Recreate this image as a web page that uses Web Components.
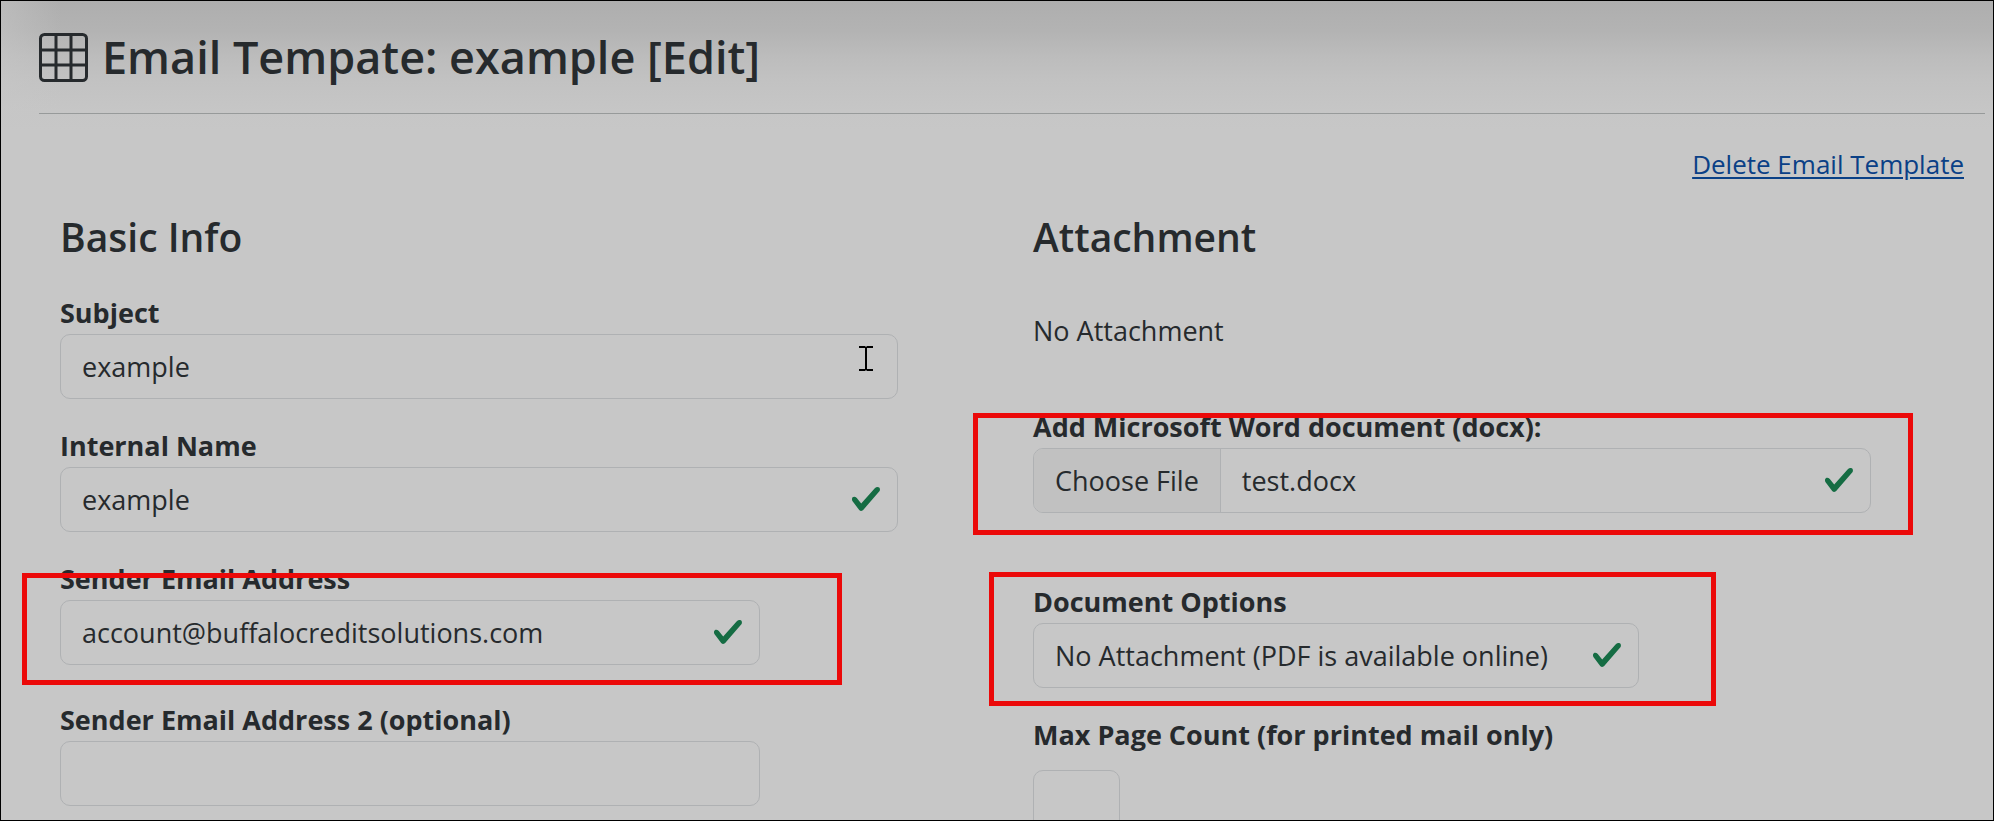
<!DOCTYPE html>
<html lang="en">
<head>
<meta charset="utf-8">
<title>Email Template</title>
<style>
body {
  margin: 0;
  --ink: #262a2d;
  --page: #c7c7c7;
  --line: #afb1b3;
  --link: #0a4086;
  --valid: #156c43;
  --mark: #eb0909;
  color: var(--ink);
  font-family: "Segoe UI", "Open Sans", sans-serif;
  font-size: 27px;
  line-height: 42px;
}
</style>
</head>
<body>
<email-template-page></email-template-page>

<template id="page-title">
<style>
:host {
  display: block;
}
header {
  display: flex;
  align-items: center;
  gap: 14px;
  height: 113px;
  box-sizing: border-box;
  border-bottom: 1px solid #979a9a;
}
svg {
  width: 49px;
  height: 49px;
  fill: none;
  stroke: currentColor;
  stroke-width: 3;
}
h1 {
  margin: 0;
  font-size: 45px;
  line-height: 60px;
  font-weight: 600;
}
</style>
<header>
  <svg viewBox="0 0 49 49" aria-hidden="true"><rect x="1.5" y="1.5" width="46" height="46" rx="4"/><path d="M17 2v45M32 2v45M2 17h45M2 32h45"/></svg>
  <h1><slot></slot></h1>
</header>
</template>

<template id="form-section">
<style>
:host {
  display: block;
  flex: 1 1 0;
  min-width: 0;
  padding: 0 21px;
}
h2 {
  margin: 0;
  font-size: 39px;
  line-height: 50px;
  font-weight: 600;
}
</style>
<h2></h2>
<slot></slot>
</template>

<template id="form-field">
<style>
:host {
  display: block;
}
label {
  display: block;
  height: 42px;
  font-weight: 700;
}
:host([loose]) label {
  margin-bottom: 14px;
}
.control {
  position: relative;
  display: flex;
  width: var(--field-width, 90%);
  height: 65px;
  box-sizing: border-box;
  border: 1px solid var(--line);
  border-radius: 10px;
  overflow: hidden;
}
.control:focus-within {
  border-color: var(--link);
}
input, select, button {
  margin: 0;
  border: 0;
  padding: 0 21px;
  background: none;
  color: inherit;
  font: inherit;
  outline: 0;
  appearance: none;
}
.text, select {
  flex: 1;
  width: 100%;
  min-width: 0;
  box-sizing: border-box;
}
button {
  background: #c1c1c1;
  border-right: 1px solid var(--line);
  cursor: pointer;
}
output {
  flex: 1;
  padding: 0 21px;
  line-height: 63px;
}
svg {
  display: none;
  position: absolute;
  right: 15px;
  top: 15px;
  width: 32px;
  height: 32px;
  fill: var(--valid);
  pointer-events: none;
}
:host([valid]) svg {
  display: block;
}
</style>
<label for="control"></label>
<div class="control">
  <svg viewBox="0 0 8 8" aria-hidden="true"><path d="M2.3 6.73.6 4.53c-.4-1.04.46-1.4 1.1-.8l1.1 1.4 3.4-3.8c.6-.63 1.6-.27 1.2.7l-4 4.6c-.43.5-.8.4-1.1.1z"/></svg>
</div>
</template>

<template id="mark-box">
<style>
:host {
  display: block;
  position: absolute;
  box-sizing: border-box;
  border: 5px solid var(--mark);
  pointer-events: none;
}
</style>
</template>

<template id="email-template-page">
<style>
:host {
  display: block;
  position: relative;
  height: 100vh;
  box-sizing: border-box;
  border: 1px solid #000;
  padding: 0 8px 0 38px;
  overflow: hidden;
  background:
    linear-gradient(to right, #c7c7c780, #c7c7c700 60px),
    linear-gradient(#aeaeae, #b3b3b3 30px, #bcbcbc 55px, #c2c2c2 80px, #c6c6c6 110px, var(--page) 130px);
}
nav {
  display: flex;
  justify-content: flex-end;
  padding: 29px 21px 0;
}
a {
  color: var(--link);
  font-size: 26px;
  text-decoration-thickness: 2px;
  text-underline-offset: 3px;
}
main {
  display: flex;
  padding-top: 27px;
}
.anchor {
  position: relative;
}
p {
  margin: 48px 0 54px;
}
.first {
  margin-top: 30px;
}
.next {
  margin-top: 26px;
}
.sender {
  margin-top: 26px;
  --field-width: min(700px, 100%);
}
.second {
  margin-top: 34px;
  --field-width: min(700px, 100%);
}
.options {
  margin-top: 68px;
  --field-width: min(606px, 100%);
}
.pages {
  margin-top: 26px;
  --field-width: 87px;
}
.mark-sender {
  inset: 15px 149px -20px -38px;
}
.mark-file {
  inset: 7px 51px -22px -60px;
}
.mark-options {
  inset: -9px 248px -18px -44px;
}
.caret {
  position: absolute;
  right: 118px;
  top: 54px;
  width: 14px;
  height: 25px;
}
</style>
<page-title>Email Tempate: example [Edit]</page-title>
<nav><a href="#delete">Delete Email Template</a></nav>
<main>
  <form-section heading="Basic Info">
    <div class="anchor first">
      <form-field label="Subject" value="example"></form-field>
      <svg class="caret" viewBox="0 0 14 25" aria-hidden="true"><path d="M0 0h6l1 1 1-1h6v2H8v21h6v2H8l-1-1-1 1H0v-2h6V2H0z"/></svg>
    </div>
    <form-field class="next" label="Internal Name" value="example" valid></form-field>
    <div class="anchor sender">
      <form-field label="Sender Email Address" type="email" value="account@buffalocreditsolutions.com" valid></form-field>
      <mark-box class="mark-sender"></mark-box>
    </div>
    <form-field class="second" label="Sender Email Address 2 (optional)" type="email"></form-field>
  </form-section>
  <form-section heading="Attachment">
    <p>No Attachment</p>
    <div class="anchor">
      <form-field label="Add Microsoft Word document (docx):" type="file" value="test.docx" valid></form-field>
      <mark-box class="mark-file"></mark-box>
    </div>
    <div class="anchor options">
      <form-field label="Document Options" type="select" value="No Attachment (PDF is available online)" valid></form-field>
      <mark-box class="mark-options"></mark-box>
    </div>
    <form-field class="pages" label="Max Page Count (for printed mail only)" loose></form-field>
  </form-section>
</main>
</template>

<script>
function stamp(host, id) {
  const root = host.attachShadow({ mode: 'open' });
  root.appendChild(document.getElementById(id).content.cloneNode(true));
  return root;
}

class PageTitle extends HTMLElement {
  constructor() {
    super();
    stamp(this, 'page-title');
  }
}

class FormSection extends HTMLElement {
  constructor() {
    super();
    stamp(this, 'form-section');
  }

  connectedCallback() {
    this.shadowRoot.querySelector('h2').textContent = this.getAttribute('heading');
  }
}

class FormField extends HTMLElement {
  constructor() {
    super();
    stamp(this, 'form-field');
  }

  connectedCallback() {
    const box = this.shadowRoot.querySelector('.control');
    const type = this.getAttribute('type') || 'text';
    const value = this.getAttribute('value') || '';
    this.shadowRoot.querySelector('label').textContent = this.getAttribute('label');

    if (type === 'select') {
      const select = document.createElement('select');
      select.id = 'control';
      select.add(new Option(value));
      box.prepend(select);
    } else if (type === 'file') {
      this.addFilePicker(box, value);
    } else {
      const input = document.createElement('input');
      input.id = 'control';
      input.className = 'text';
      input.type = type;
      input.value = value;
      box.prepend(input);
    }
  }

  // the native picker stays hidden, the button opens it
  addFilePicker(box, value) {
    const picker = document.createElement('input');
    const button = document.createElement('button');
    const name = document.createElement('output');
    picker.type = 'file';
    picker.id = 'control';
    picker.accept = '.docx';
    picker.hidden = true;
    button.type = 'button';
    button.textContent = 'Choose File';
    name.textContent = value;
    button.addEventListener('click', () => picker.click());
    picker.addEventListener('change', () => {
      name.textContent = picker.files.length ? picker.files[0].name : value;
    });
    box.prepend(picker, button, name);
  }
}

class MarkBox extends HTMLElement {
  constructor() {
    super();
    stamp(this, 'mark-box');
  }
}

class EmailTemplatePage extends HTMLElement {
  constructor() {
    super();
    stamp(this, 'email-template-page');
  }
}

customElements.define('page-title', PageTitle);
customElements.define('form-section', FormSection);
customElements.define('form-field', FormField);
customElements.define('mark-box', MarkBox);
customElements.define('email-template-page', EmailTemplatePage);
</script>
</body>
</html>
